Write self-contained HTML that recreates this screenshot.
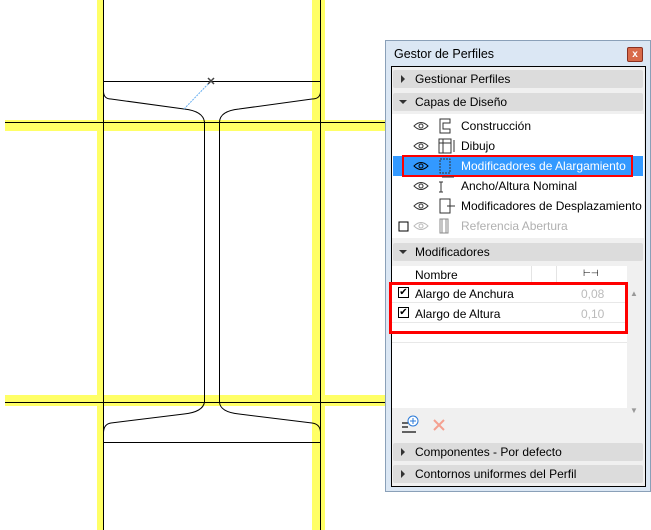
<!DOCTYPE html>
<html><head><meta charset="utf-8"><style>
body{margin:0;width:651px;height:530px;position:relative;overflow:hidden;background:#fff;font-family:"Liberation Sans",sans-serif;font-size:12px;color:#000}
.a{position:absolute}
.hd{position:absolute;left:393px;width:250px;height:18px;background:#dcdcdc;border-radius:2px;line-height:18px}
.hd span{position:absolute;left:22px}
.tri{position:absolute;left:8px;top:5px;width:0;height:0;border-top:4px solid transparent;border-bottom:4px solid transparent;border-left:4px solid #333}
.tri.d{left:6px;top:7px;border-left:4px solid transparent;border-right:4px solid transparent;border-top:4px solid #333;border-bottom:0}
.row{position:absolute;left:461px;line-height:20px;height:20px}
</style></head><body>
<svg class="a" style="left:0;top:0" width="385" height="530">
<rect x="97" y="0" width="7" height="530" fill="#ffff66"/>
<rect x="312" y="0" width="13" height="530" fill="#ffff66"/>
<rect x="5" y="120" width="380" height="11" fill="#ffff66"/>
<rect x="5" y="395" width="380" height="11" fill="#ffff66"/>
<g stroke="#000" stroke-width="1" fill="none">
<line x1="103.5" y1="0" x2="103.5" y2="530"/>
<line x1="320.5" y1="0" x2="320.5" y2="530"/>
<line x1="5" y1="122.5" x2="385" y2="122.5"/>
<line x1="5" y1="402.5" x2="385" y2="402.5"/>
<line x1="103" y1="81.5" x2="320" y2="81.5"/>
<line x1="103" y1="442.5" x2="320" y2="442.5"/>
<path d="M103.5 92 Q104 99 111 99 L184 109 Q203 111 204.5 122 L204.5 402 Q203 412 184 414 L111 423 Q104 424 103.5 432"/>
<path d="M320.5 92 Q320 99 312 99 L239 109 Q220 111 219.5 122 L219.5 402 Q220 412 239 414 L312 423 Q320 424 320.5 432"/>
</g>
<line x1="184" y1="109" x2="211" y2="81" stroke="#6ab0f0" stroke-width="1" stroke-dasharray="2,1"/>
<path d="M208 78 L214 84 M214 78 L208 84" stroke="#444" stroke-width="1.5"/>
</svg>
<div class="a" style="left:385px;top:40px;width:266px;height:452px;background:#dbe7f4;border:1px solid #8aa0b8;box-sizing:border-box"></div>
<div class="a" style="left:394px;top:47px;font-size:12.5px">Gestor de Perfiles</div>
<div class="a" style="left:627px;top:47px;width:16px;height:15px;background:#d86a4a;border:1px solid #8a3020;border-radius:2px;box-sizing:border-box;color:#fff;font-size:10px;font-weight:bold;text-align:center;line-height:13px">x</div>
<div class="a" style="left:391px;top:66px;width:255px;height:421px;background:#f0f0f0;border:1px solid #000;box-sizing:border-box"></div>
<div class="hd" style="top:70px"><i class="tri"></i><span>Gestionar Perfiles</span></div>
<div class="hd" style="top:93px"><i class="tri d"></i><span>Capas de Diseño</span></div>
<div class="a" style="left:392px;top:114px;width:252px;height:124px;background:#fff"></div>
<div class="a" style="left:393px;top:156px;width:250px;height:20px;background:#3399ff"></div>
<div class="a" style="left:402px;top:155px;width:231px;height:22px;border:2px solid #f00;box-sizing:border-box"></div>
<svg class="a" style="left:392px;top:114px" width="80" height="124">
<g fill="none" stroke="#333">
<g id="e"><path d="M22 12 Q29 5 36 12 Q29 19 22 12Z"/><circle cx="29" cy="12" r="2"/></g>
<use href="#e" y="20"/><use href="#e" y="40" stroke="#000"/><use href="#e" y="60"/><use href="#e" y="80"/>
<g stroke="#bbb"><path d="M22 112 Q29 105 36 112 Q29 119 22 112Z"/><circle cx="29" cy="112" r="2"/></g>
<path d="M48 5 h10 v4 h-7 v6 h7 v4 h-10z"/>
<path d="M47 25 h12 v14 h-12z M47 29 h12 M51 25 v14 M62 26 v12"/>
<path d="M48 45 h10 v14 h-10z" stroke-dasharray="2,1"/>
<path d="M49 68 v10 M47 68 h4 M47 78 h4 M50 63 h12"/>
<path d="M48 85 h10 v14 h-10z M55 92 h8"/>
<path d="M48 105 h8 v14 h-8z M50 105 v14 M54 105 v14" stroke="#888"/>
</g>
<rect x="7" y="108" width="9" height="9" fill="#fff" stroke="#000"/>
</svg>
<div class="row" style="top:116px">Construcción</div>
<div class="row" style="top:136px">Dibujo</div>
<div class="row" style="top:156px;color:#fff">Modificadores de Alargamiento</div>
<div class="row" style="top:176px">Ancho/Altura Nominal</div>
<div class="row" style="top:196px">Modificadores de Desplazamiento</div>
<div class="row" style="top:216px;color:#b0b0b0">Referencia Abertura</div>
<div class="hd" style="top:243px"><i class="tri d"></i><span>Modificadores</span></div>
<div class="a" style="left:392px;top:266px;width:235px;height:142px;background:#fff"></div>
<div class="a" style="left:627px;top:266px;width:14px;height:142px;background:#f0f0f0;color:#999;font-size:8px;text-align:center"><div style="margin-top:23px">▲</div><div style="margin-top:108px">▼</div></div>
<div class="a" style="left:392px;top:266px;width:235px;height:18px;background:#fff;border-bottom:1px solid #e4e4e4"></div>
<div class="a" style="left:531px;top:266px;width:1px;height:18px;background:#e4e4e4"></div>
<div class="a" style="left:556px;top:266px;width:1px;height:18px;background:#e4e4e4"></div>
<div class="a" style="left:415px;top:268px">Nombre</div>
<div class="a" style="left:583px;top:268px;font-size:9px">⊢⊣</div>
<div class="a" style="left:392px;top:302px;width:235px;height:1px;background:#e8e8e8"></div>
<div class="a" style="left:392px;top:322px;width:235px;height:1px;background:#e8e8e8"></div>
<div class="a" style="left:392px;top:342px;width:235px;height:1px;background:#e8e8e8"></div>
<div class="a" style="left:398px;top:287px;width:11px;height:11px;border:1px solid #000;box-sizing:border-box;font-size:10px;line-height:9px;text-align:center">✔</div>
<div class="a" style="left:398px;top:307px;width:11px;height:11px;border:1px solid #000;box-sizing:border-box;font-size:10px;line-height:9px;text-align:center">✔</div>
<div class="a" style="left:415px;top:287px">Alargo de Anchura</div>
<div class="a" style="left:415px;top:307px">Alargo de Altura</div>
<div class="a" style="left:581px;top:287px;color:#bbb">0,08</div>
<div class="a" style="left:581px;top:307px;color:#bbb">0,10</div>
<div class="a" style="left:389px;top:282px;width:239px;height:52px;border:3px solid #f00;box-sizing:border-box"></div>
<svg class="a" style="left:400px;top:415px" width="50" height="20">
<path d="M2 8 h6 M2 12 h6 M2 17 h14" stroke="#333" stroke-width="1.5"/>
<circle cx="13" cy="6" r="5" fill="#fff" stroke="#2a7ad8"/><path d="M10 6 h6 M13 3 v6" stroke="#2a7ad8"/>
<path d="M34 5 l10 10 M44 5 l-10 10" stroke="#f4a090" stroke-width="2"/>
</svg>
<div class="hd" style="top:443px"><i class="tri"></i><span>Componentes - Por defecto</span></div>
<div class="hd" style="top:465px"><i class="tri"></i><span>Contornos uniformes del Perfil</span></div>
</body></html>
